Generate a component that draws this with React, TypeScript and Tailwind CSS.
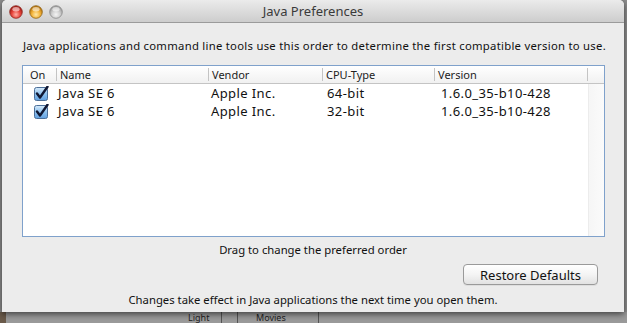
import React from "react";

const font = { fontFamily: '"Noto Sans", "Open Sans", "DejaVu Sans", sans-serif' };

function Light({ kind }: { kind: "red" | "yellow" | "gray" }) {
  const c =
    kind === "red"
      ? { a: "#ffb3a8", b: "#e8453c", c: "#a81d16", s: "#8c2a22" }
      : kind === "yellow"
      ? { a: "#ffe9a8", b: "#f3b33a", c: "#b8760e", s: "#8f6418" }
      : { a: "#f4f4f4", b: "#cfcfcf", c: "#9e9e9e", s: "#8a8a8a" };
  const id = "g" + kind;
  return (
    <svg width="14" height="14" viewBox="0 0 14 14">
      <defs>
        <radialGradient id={id} cx="50%" cy="70%" r="60%">
          <stop offset="0%" stopColor={c.a} />
          <stop offset="55%" stopColor={c.b} />
          <stop offset="100%" stopColor={c.c} />
        </radialGradient>
      </defs>
      <circle cx="7" cy="7" r="6.3" fill={`url(#${id})`} stroke={c.s} strokeWidth="0.8" />
      <ellipse cx="7" cy="4.2" rx="3.6" ry="2.2" fill="white" opacity="0.55" />
    </svg>
  );
}

function Check() {
  return (
    <svg width="15" height="15" viewBox="0 0 15 15">
      <defs>
        <linearGradient id="cb" x1="0" y1="0" x2="0" y2="1">
          <stop offset="0%" stopColor="#d9ecfb" />
          <stop offset="50%" stopColor="#8ec2ef" />
          <stop offset="100%" stopColor="#5f9fe0" />
        </linearGradient>
      </defs>
      <rect x="0.5" y="1.5" width="13" height="13" rx="2" fill="url(#cb)" stroke="#4c6f99" />
      <path d="M3 7.5 L6 11.5 L13.5 0.8" fill="none" stroke="#0f1733" strokeWidth="2.4" strokeLinecap="round" strokeLinejoin="round" />
    </svg>
  );
}

const rows = [
  { name: "Java SE 6", vendor: "Apple Inc.", cpu: "64-bit", ver: "1.6.0_35-b10-428" },
  { name: "Java SE 6", vendor: "Apple Inc.", cpu: "32-bit", ver: "1.6.0_35-b10-428" },
];

export default function App() {
  return (
    <div className="relative w-[627px] h-[323px] overflow-hidden bg-[#8e8e8e]" style={font}>
      <div className="absolute left-0 top-[312px] w-[627px] h-[11px] bg-[#9a9a9a] flex text-[9px] text-[#222] leading-[11px]">
        <div className="w-[6px] bg-[#6a5a4a]" />
        <div className="ml-[178px] w-[38px] h-full border-r border-[#555] pl-[4px]">Light</div>
        <div className="w-[16px] h-full border-r border-[#555]" />
        <div className="ml-[18px]">Movies</div>
        <div className="ml-[32px] w-[1px] h-full bg-[#555]" />
      </div>
      <div className="absolute left-[2px] top-[0px] w-[622px] h-[312px] rounded-t-[5px] bg-[#ececec] flex flex-col shadow-[0_2px_6px_rgba(0,0,0,0.6)]">
        <div className="relative h-[23px] shrink-0 rounded-t-[5px] bg-gradient-to-b from-[#ebebeb] to-[#cdcdcd] border-b border-[#9b9b9b] flex items-center">
          <div className="flex gap-[6px] pl-[7px] pt-[1px]">
            <Light kind="red" />
            <Light kind="yellow" />
            <Light kind="gray" />
          </div>
          <div className="absolute inset-0 flex items-center justify-center text-[13px] text-[#3a3a3a] pt-[1px]">
            Java Preferences
          </div>
        </div>
        <div className="pl-[21px] pt-[16px] text-[11.3px] tracking-[0.27px] text-[#111] leading-[14px] whitespace-nowrap">
          Java applications and command line tools use this order to determine the first compatible version to use.
        </div>
        <div className="ml-[20px] mt-[12px] w-[583px] h-[172px] shrink-0 border border-[#7fa1cb] bg-white flex flex-col">
          <div className="h-[18px] shrink-0 flex items-center text-[11px] text-[#222] bg-gradient-to-b from-white to-[#f1f1f1] border-b border-[#c4c4c4]">
            <div className="w-[34px] pl-[7px] border-r border-[#c4c4c4] leading-[13px]">On</div>
            <div className="w-[152px] pl-[3px] border-r border-[#c4c4c4] leading-[13px]">Name</div>
            <div className="w-[114px] pl-[3px] border-r border-[#c4c4c4] leading-[13px]">Vendor</div>
            <div className="w-[112px] pl-[3px] border-r border-[#c4c4c4] leading-[13px]">CPU-Type</div>
            <div className="w-[153px] pl-[3px] border-r border-[#c4c4c4] leading-[13px]">Version</div>
            <div className="flex-1" />
          </div>
          <div className="flex flex-1">
            <div className="w-[565px] flex flex-col">
              {rows.map((r, i) => (
                <div key={i} className="h-[18px] flex items-center text-[13px] tracking-[0.4px] text-[#111] leading-[18px]">
                  <div className="w-[34px] pl-[11px] flex items-center">
                    <Check />
                  </div>
                  <div className="w-[153px] pl-[1px]">{r.name}</div>
                  <div className="w-[115px] pl-[1px]">{r.vendor}</div>
                  <div className="w-[116px] pl-[2px]">{r.cpu}</div>
                  <div className="flex-1">{r.ver}</div>
                </div>
              ))}
            </div>
            <div className="flex-1 bg-gradient-to-r from-[#f6f6f6] to-[#fbfbfb] border-l border-[#ececec]" />
          </div>
        </div>
        <div className="text-center text-[11.3px] text-[#111] mt-[6px] leading-[14px]">Drag to change the preferred order</div>
        <div className="flex justify-end pr-[26px] mt-[7px]">
          <button className="w-[135px] h-[21px] rounded-[4px] border border-[#9a9a9a] bg-gradient-to-b from-white via-[#f4f4f4] to-[#e2e2e2] text-[13px] text-[#111] leading-[18px] shadow-[0_1px_0_rgba(0,0,0,0.06)]">
            Restore Defaults
          </button>
        </div>
        <div className="text-center text-[11.3px] text-[#111] mt-[8px] leading-[14px]">
          Changes take effect in Java applications the next time you open them.
        </div>
      </div>
    </div>
  );
}
